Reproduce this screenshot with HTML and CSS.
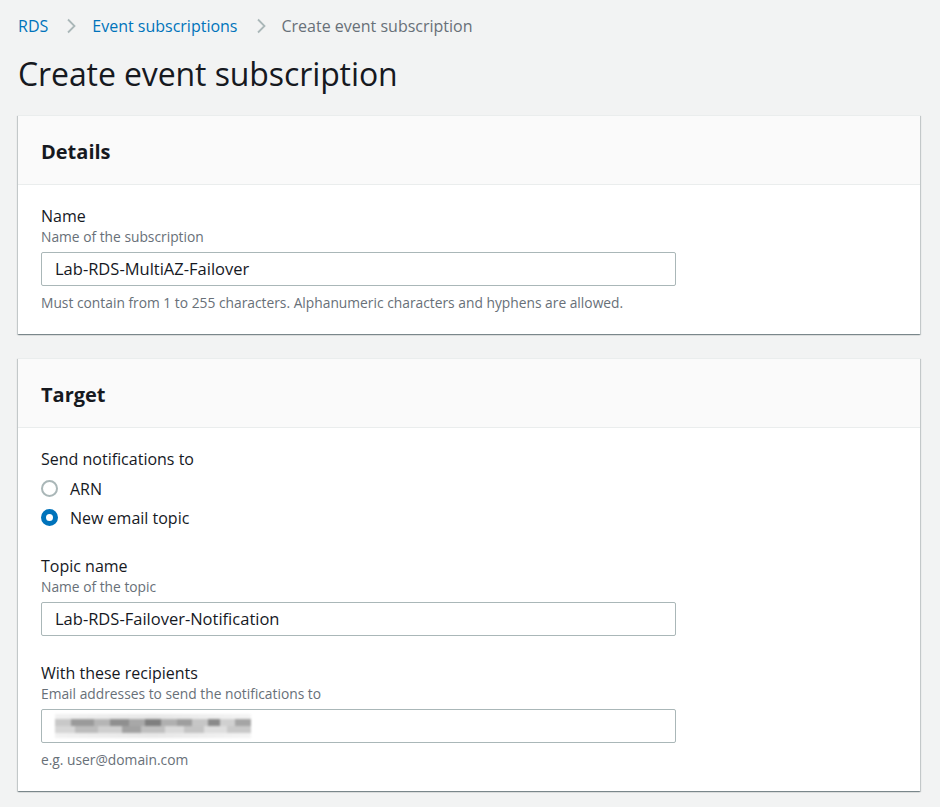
FILE: index.html
```html
<!DOCTYPE html>
<html lang="en">
<head>
<meta charset="utf-8">
<title>Create event subscription</title>
<link rel="stylesheet" href="styles.css">
</head>
<body>
<div class="page">
  <nav class="breadcrumb">
    <a class="crumb link" href="#">RDS</a>
    <svg class="chev" viewBox="0 0 10 16" width="10" height="16"><polyline points="2,1.5 8.5,8 2,14.5" fill="none" stroke="#aab7b8" stroke-width="1.8"/></svg>
    <a class="crumb link" href="#">Event subscriptions</a>
    <svg class="chev" viewBox="0 0 10 16" width="10" height="16"><polyline points="2,1.5 8.5,8 2,14.5" fill="none" stroke="#aab7b8" stroke-width="1.8"/></svg>
    <span class="crumb current">Create event subscription</span>
  </nav>
  <h1 class="title">Create event subscription</h1>

  <section class="card">
    <div class="card-header"><h2>Details</h2></div>
    <div class="card-body">
      <div class="field">
        <div class="label">Name</div>
        <div class="desc">Name of the subscription</div>
        <div class="input">Lab-RDS-MultiAZ-Failover</div>
        <div class="hint">Must contain from 1 to 255 characters. Alphanumeric characters and hyphens are allowed.</div>
      </div>
    </div>
  </section>

  <section class="card">
    <div class="card-header"><h2>Target</h2></div>
    <div class="card-body">
      <div class="field radios">
        <div class="label">Send notifications to</div>
        <div class="radio-row"><span class="radio"></span><span class="radio-label">ARN</span></div>
        <div class="radio-row"><span class="radio checked"></span><span class="radio-label">New email topic</span></div>
      </div>
      <div class="field topic">
        <div class="label">Topic name</div>
        <div class="desc">Name of the topic</div>
        <div class="input">Lab-RDS-Failover-Notification</div>
      </div>
      <div class="field recipients">
        <div class="label">With these recipients</div>
        <div class="desc">Email addresses to send the notifications to</div>
        <div class="input"><span class="redacted"></span></div>
        <div class="hint">e.g. user@domain.com</div>
      </div>
    </div>
  </section>
</div>
</body>
</html>
```

FILE: styles.css
```css
* { box-sizing: border-box; }
html, body { margin: 0; padding: 0; }
body {
  background: #f2f3f3;
  color: #16191f;
  font-family: "Open Sans", "Noto Sans", sans-serif;
  width: 940px;
  height: 807px;
  overflow: hidden;
}
.page {
  padding: 14px 20px 0 18px;
}
.breadcrumb {
  display: flex;
  align-items: center;
  height: 24px;
  font-size: 16px;
  line-height: 24px;
}
.crumb { text-decoration: none; }
.link { color: #0073bb; }
.current { color: #687078; }
.chev { margin: 0 16px 0 18px; }
.title {
  margin: 18px 0 23px;
  font-size: 32px;
  line-height: 36px;
  font-weight: 400;
  color: #16191f;
  letter-spacing: -0.1px;
}
.card {
  background: #fff;
  box-shadow: 0 1px 1px 0 rgba(0, 28, 36, .3), 1px 1px 1px 0 rgba(0, 28, 36, .15), -1px 1px 1px 0 rgba(0, 28, 36, .15);
  border-top: 1px solid #eaeded;
  margin-bottom: 24px;
}
.card-header {
  background: #fafafa;
  border-bottom: 1px solid #eaeded;
  padding: 23px 23px 18px;
  height: 69px;
}
.card-header h2 {
  margin: 0;
  font-size: 20px;
  line-height: 26px;
  font-weight: 700;
}
.card-body {
  padding: 20px 23px 21px;
  display: flex;
  flex-direction: column;
}
.field { display: flex; flex-direction: column; }
.label { font-size: 16px; line-height: 22px; }
.desc { font-size: 13.8px; line-height: 20px; color: #687078; }
.hint { font-size: 13.8px; line-height: 20px; color: #687078; margin-top: 7px; }
.input {
  margin-top: 5px;
  width: 635px;
  height: 34px;
  border: 1px solid #aab7b8;
  border-radius: 2px;
  padding: 0 13px;
  font-size: 16.5px;
  line-height: 32px;
  display: flex;
  align-items: center;
}
.radio-row {
  display: flex;
  align-items: center;
  height: 29px;
  font-size: 16px;
}
.radios .label { margin-bottom: 4px; }
.radio {
  width: 17px;
  height: 17px;
  border-radius: 50%;
  border: 2px solid #aab7b8;
  margin-right: 12px;
  flex: none;
}
.radio.checked {
  border: 5px solid #0073bb;
}
.topic { margin-top: 23px; }
.recipients { margin-top: 26px; }
.redacted {
  display: block;
  width: 196px;
  height: 24px;
  filter: blur(1.2px);
  background:
    linear-gradient(90deg, #c8c8c8 0 8%, #9a9a9a 8% 20%, #b5b5b5 20% 28%, #8f8f8f 28% 38%, #a8a8a8 38% 46%, #7f7f7f 46% 54%, #b0b0b0 54% 62%, #9e9e9e 62% 70%, #c6c6c6 70% 78%, #8a8a8a 78% 84%, #d0d0d0 84% 92%, #a5a5a5 92% 100%) 0 5px / 100% 7px no-repeat,
    linear-gradient(90deg, #d6d6d6 0 10%, #bcbcbc 10% 22%, #cfcfcf 22% 34%, #a2a2a2 34% 44%, #c0c0c0 44% 56%, #dadada 56% 66%, #c4c4c4 66% 76%, #dedede 76% 88%, #c9c9c9 88% 100%) 0 12px / 100% 7px no-repeat,
    linear-gradient(90deg, #f2f2f2, #e8e8e8 50%, #f4f4f4) 0 0 / 100% 24px no-repeat;
}
```
